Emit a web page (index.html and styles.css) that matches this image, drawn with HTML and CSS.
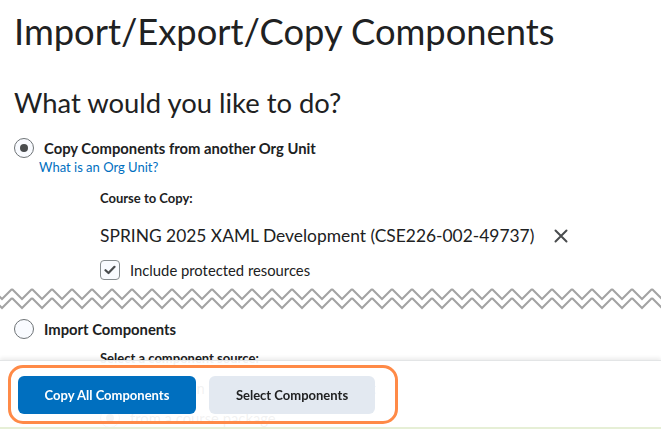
FILE: index.html
```html
<!DOCTYPE html>
<html lang="en">
<head>
<meta charset="utf-8">
<title>Import/Export/Copy Components</title>
<link rel="stylesheet" href="styles.css">
</head>
<body>
<main class="page">
  <h1 class="title">Import/Export/Copy Components</h1>
  <h2 class="subtitle">What would you like to do?</h2>

  <section class="option">
    <div class="radio-row">
      <span class="radio radio-checked"></span>
      <span class="option-label">Copy Components from another Org Unit</span>
    </div>
    <a class="help-link" href="#">What is an Org Unit?</a>
    <div class="details">
      <div class="field-label">Course to Copy:</div>
      <div class="course-row">
        <span class="course-name">SPRING 2025 XAML Development (CSE226-002-49737)</span>
        <span class="clear-btn">
          <svg width="14" height="14" viewBox="0 0 14 14"><path d="M1.5 1.5 L12.5 12.5 M12.5 1.5 L1.5 12.5" stroke="#494c4e" stroke-width="2" stroke-linecap="round"/></svg>
        </span>
      </div>
      <div class="check-row">
        <span class="checkbox">
          <svg width="12" height="10" viewBox="0 0 12 10"><path d="M1.5 5.2 L4.5 8 L10.5 1.8" fill="none" stroke="#494c4e" stroke-width="2.2" stroke-linecap="round" stroke-linejoin="round"/></svg>
        </span>
        <span class="check-label">Include protected resources</span>
      </div>
    </div>
  </section>

  <div class="tear">
    <svg width="661" height="24" viewBox="0 0 661 24">
      <defs>
        <pattern id="zig" x="-8" y="0" width="20" height="24" patternUnits="userSpaceOnUse">
          <path d="M0 1 L10 11 L20 1 M0 10 L10 20 L20 10" fill="none" stroke="#a3a3a3" stroke-width="2"/>
        </pattern>
      </defs>
      <rect x="0" y="0" width="661" height="24" fill="url(#zig)"/>
    </svg>
  </div>

  <section class="option option-second">
    <div class="radio-row">
      <span class="radio"></span>
      <span class="option-label">Import Components</span>
    </div>
    <div class="details details-second">
      <div class="field-label">Select a component source:</div>
      <div class="sub-radio-row">
        <span class="radio radio-small"></span>
        <span class="sub-label">from within the Learning Environment</span>
      </div>
      <div class="sub-radio-row">
        <span class="radio radio-small radio-checked"></span>
        <span class="sub-label">from a course package</span>
      </div>
    </div>
  </section>
</main>

<footer class="action-bar">
  <div class="highlight">
    <button class="btn btn-primary" type="button">Copy All Components</button>
    <button class="btn btn-secondary" type="button">Select Components</button>
  </div>
</footer>
</body>
</html>
```

FILE: styles.css
```css
* { box-sizing: border-box; }

html, body {
  margin: 0;
  padding: 0;
  background: #ffffff;
  font-family: Lato, "Open Sans", "Liberation Sans", sans-serif;
  color: #202122;
  overflow: hidden;
}

.page {
  padding: 10px 0 0 14px;
  height: 429px;
}

.title {
  margin: 0;
  font-size: 36.3px;
  font-weight: 400;
  line-height: 43px;
  letter-spacing: 0;
}

.subtitle {
  margin: 34px 0 0 0;
  font-size: 27.4px;
  font-weight: 400;
  line-height: 32px;
}

.option {
  margin-top: 19px;
}

.radio-row {
  display: flex;
  align-items: center;
  gap: 10px;
  height: 20px;
}

.radio {
  width: 20px;
  height: 20px;
  border: 1px solid #6e7376;
  border-radius: 50%;
  background: #f9fbff;
  display: flex;
  align-items: center;
  justify-content: center;
  flex: none;
}

.radio-checked::after {
  content: "";
  width: 8px;
  height: 8px;
  border-radius: 50%;
  background: #494c4e;
}

.option-label {
  font-size: 14.8px;
  font-weight: 700;
  line-height: 20px;
}

.help-link {
  display: block;
  margin: 1px 0 0 25px;
  font-size: 13px;
  line-height: 16px;
  color: #006fbf;
  text-decoration: none;
}

.details {
  margin-left: 86px;
}

.field-label {
  margin-top: 15px;
  font-size: 13px;
  font-weight: 700;
  line-height: 16px;
}

.course-row {
  display: flex;
  align-items: center;
  gap: 20px;
  margin-top: 18px;
  height: 24px;
}

.course-name {
  font-size: 17.4px;
  line-height: 24px;
}

.clear-btn {
  display: flex;
  width: 14px;
  height: 14px;
}

.check-row {
  display: flex;
  align-items: center;
  gap: 10px;
  margin-top: 12px;
  height: 20px;
}

.checkbox {
  width: 20px;
  height: 20px;
  border: 1px solid #868c8f;
  border-radius: 4px;
  background: #f9fbff;
  display: flex;
  align-items: center;
  justify-content: center;
  flex: none;
}

.check-label {
  font-size: 14.8px;
  line-height: 20px;
}

.tear {
  margin: 8px 0 0 -14px;
  height: 24px;
}

.tear svg { display: block; }

.option-second {
  margin-top: 7px;
}

.details-second .field-label {
  margin-top: 11px;
}

.sub-radio-row {
  display: flex;
  align-items: center;
  gap: 10px;
  margin-top: 12px;
  height: 20px;
}

.sub-radio-row + .sub-radio-row {
  margin-top: 10px;
}

.sub-label {
  font-size: 14.8px;
  line-height: 20px;
}

.action-bar {
  position: fixed;
  left: 0;
  right: 0;
  bottom: 0;
  height: 69px;
  padding: 4px 0 0 8px;
  background: rgba(255, 255, 255, 0.94);
  border-top: 1px solid #e3e5e6;
  box-shadow: 0 -2px 4px rgba(0, 0, 0, 0.08);
  border-bottom: 2px solid #e6efd6;
}

.highlight {
  display: inline-flex;
  gap: 13px;
  padding: 8px 20px 7px 7px;
  border: 3px solid #ff8a47;
  border-radius: 15px;
}

.btn {
  height: 38px;
  border: none;
  border-radius: 6px;
  font-family: Lato, "Open Sans", "Liberation Sans", sans-serif;
  font-size: 13px;
  font-weight: 700;
  cursor: pointer;
}

.btn-primary {
  width: 178px;
  background: #006fbf;
  color: #ffffff;
}

.btn-secondary {
  width: 166px;
  background: #e3e9f1;
  color: #202122;
}
```
